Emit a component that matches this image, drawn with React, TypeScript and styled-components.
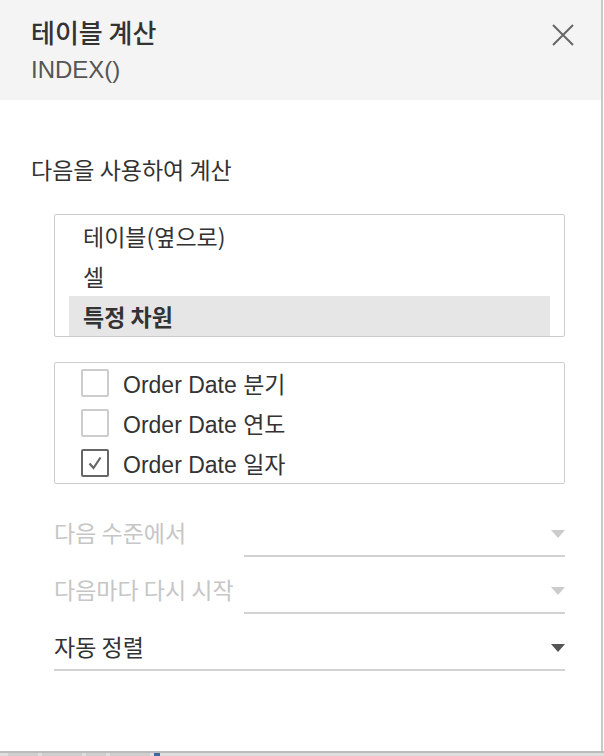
import React from 'react';
import styled, { createGlobalStyle } from 'styled-components';

const GlobalStyle = createGlobalStyle`
  html, body {
    margin: 0;
    padding: 0;
    background: #ffffff;
  }
  body {
    font-family: "Noto Sans CJK KR", sans-serif;
    color: #333333;
  }
`;

const Page = styled.div`
  width: 604px;
  height: 756px;
  display: flex;
  flex-direction: column;
  overflow: hidden;
`;

const Panel = styled.div`
  width: 601px;
  height: 751px;
  border-right: 2px solid #c9c9c9;
  background: #ffffff;
  display: flex;
  flex-direction: column;
  flex-shrink: 0;
`;

const Header = styled.div`
  height: 100px;
  box-sizing: border-box;
  background: #f4f4f4;
  padding: 15px 26px 0 31px;
  display: flex;
  justify-content: space-between;
  align-items: flex-start;
`;

const Titles = styled.div`
  display: flex;
  flex-direction: column;
`;

const Title = styled.div`
  font-size: 26px;
  line-height: 34px;
  font-weight: 500;
  color: #333333;
  font-family: "Noto Sans CJK KR", sans-serif;
`;

const Subtitle = styled.div`
  margin-top: 7px;
  font-size: 24px;
  line-height: 28px;
  color: #555555;
  font-family: "Liberation Sans", "Noto Sans CJK KR", sans-serif;
`;

const CloseButton = styled.button`
  border: 0;
  background: transparent;
  padding: 0;
  margin-top: 8px;
  width: 24px;
  height: 24px;
  cursor: pointer;
  display: flex;
`;

const Body = styled.div`
  padding: 54px 36px 0 31px;
  display: flex;
  flex-direction: column;
`;

const SectionLabel = styled.div`
  font-size: 23px;
  line-height: 30px;
  color: #333333;
  font-family: "Noto Sans CJK KR", sans-serif;
`;

const Indented = styled.div`
  margin-left: 23px;
  display: flex;
  flex-direction: column;
`;

const ListBox = styled.div`
  margin-top: 30px;
  border: 1px solid #cccccc;
  border-radius: 2px;
  padding: 1px 14px 0 14px;
  display: flex;
  flex-direction: column;
`;

const ListItem = styled.div<{ $selected?: boolean }>`
  height: 40px;
  display: flex;
  align-items: center;
  padding-left: 14px;
  font-size: 23px;
  font-family: "Noto Sans CJK KR", sans-serif;
  font-weight: ${({ $selected }) => ($selected ? 700 : 400)};
  background: ${({ $selected }) => ($selected ? '#e6e6e6' : 'transparent')};
  color: #333333;
`;

const CheckList = styled.div`
  margin-top: 25px;
  border: 1px solid #cccccc;
  border-radius: 2px;
  padding: 0 0 0 26px;
  display: flex;
  flex-direction: column;
`;

const CheckRow = styled.label`
  height: 40px;
  display: flex;
  align-items: center;
  gap: 14px;
  font-size: 23px;
  color: #333333;
  font-family: "Liberation Sans", "Noto Sans CJK KR", sans-serif;
`;

const Box = styled.span<{ $checked?: boolean }>`
  width: 28px;
  height: 28px;
  flex-shrink: 0;
  box-sizing: border-box;
  border: 2px solid ${({ $checked }) => ($checked ? '#666666' : '#cccccc')};
  border-radius: 2px;
  display: flex;
  align-items: center;
  justify-content: center;
  background: #ffffff;
`;

const Fields = styled.div`
  margin-top: 36px;
  display: flex;
  flex-direction: column;
  gap: 20px;
`;

const FieldRow = styled.div`
  display: flex;
  align-items: flex-end;
`;

const FieldLabel = styled.div<{ $disabled?: boolean }>`
  width: 190px;
  flex-shrink: 0;
  font-size: 23px;
  line-height: 24px;
  padding-bottom: 13px;
  color: ${({ $disabled }) => ($disabled ? '#c6c6c6' : '#333333')};
  font-family: "Noto Sans CJK KR", sans-serif;
  white-space: nowrap;
`;

const Select = styled.div<{ $disabled?: boolean }>`
  flex: 1;
  height: 37px;
  box-sizing: border-box;
  border-bottom: 2px solid #d2d2d2;
  display: flex;
  align-items: center;
  justify-content: space-between;
  padding-bottom: 11px;
  font-size: 23px;
  line-height: 24px;
  color: ${({ $disabled }) => ($disabled ? '#c6c6c6' : '#333333')};
  font-family: "Noto Sans CJK KR", sans-serif;
`;

const Arrow = styled.span<{ $disabled?: boolean }>`
  width: 0;
  height: 0;
  margin-top: 4px;
  border-left: 7px solid transparent;
  border-right: 7px solid transparent;
  border-top: 8px solid ${({ $disabled }) => ($disabled ? '#cccccc' : '#555555')};
`;

const Backdrop = styled.div`
  flex: 1;
  border-top: 2px solid #bcbcbc;
  background: #dedede;
  display: flex;
  align-items: flex-start;
  gap: 4px;
  padding-left: 8px;
`;

const BackdropBlock = styled.span<{ $w: number; $color?: string }>`
  width: ${({ $w }) => $w}px;
  height: 4px;
  background: ${({ $color }) => $color || '#cfcfcf'};
`;

const CloseIcon = () => (
  <svg width="24" height="24" viewBox="0 0 24 24">
    <path d="M2 2 L22 22 M22 2 L2 22" stroke="#666666" strokeWidth="2" fill="none" />
  </svg>
);

const CheckMark = () => (
  <svg width="18" height="18" viewBox="0 0 18 18">
    <path d="M3.5 9.5 L7.5 14 L14.5 3.5" stroke="#666666" strokeWidth="2.2" fill="none" />
  </svg>
);

const computeOptions = [
  { label: '테이블(옆으로)', selected: false },
  { label: '셀', selected: false },
  { label: '특정 차원', selected: true },
];

const dimensions = [
  { label: 'Order Date 분기', checked: false },
  { label: 'Order Date 연도', checked: false },
  { label: 'Order Date 일자', checked: true },
];

export default function App() {
  return (
    <Page>
      <GlobalStyle />
      <Panel>
        <Header>
          <Titles>
            <Title>테이블 계산</Title>
            <Subtitle>INDEX()</Subtitle>
          </Titles>
          <CloseButton aria-label="닫기">
            <CloseIcon />
          </CloseButton>
        </Header>
        <Body>
          <SectionLabel>다음을 사용하여 계산</SectionLabel>
          <Indented>
            <ListBox>
              {computeOptions.map(opt => (
                <ListItem key={opt.label} $selected={opt.selected}>
                  {opt.label}
                </ListItem>
              ))}
            </ListBox>
            <CheckList>
              {dimensions.map(dim => (
                <CheckRow key={dim.label}>
                  <Box $checked={dim.checked}>{dim.checked && <CheckMark />}</Box>
                  {dim.label}
                </CheckRow>
              ))}
            </CheckList>
            <Fields>
              <FieldRow>
                <FieldLabel $disabled>다음 수준에서</FieldLabel>
                <Select $disabled>
                  <span />
                  <Arrow $disabled />
                </Select>
              </FieldRow>
              <FieldRow>
                <FieldLabel $disabled>다음마다 다시 시작</FieldLabel>
                <Select $disabled>
                  <span />
                  <Arrow $disabled />
                </Select>
              </FieldRow>
              <FieldRow>
                <Select>
                  <span>자동 정렬</span>
                  <Arrow />
                </Select>
              </FieldRow>
            </Fields>
          </Indented>
        </Body>
      </Panel>
      <Backdrop>
        <BackdropBlock $w={30} />
        <BackdropBlock $w={40} />
        <BackdropBlock $w={20} />
        <BackdropBlock $w={40} />
        <BackdropBlock $w={6} $color="#3d6a9a" />
      </Backdrop>
    </Page>
  );
}
